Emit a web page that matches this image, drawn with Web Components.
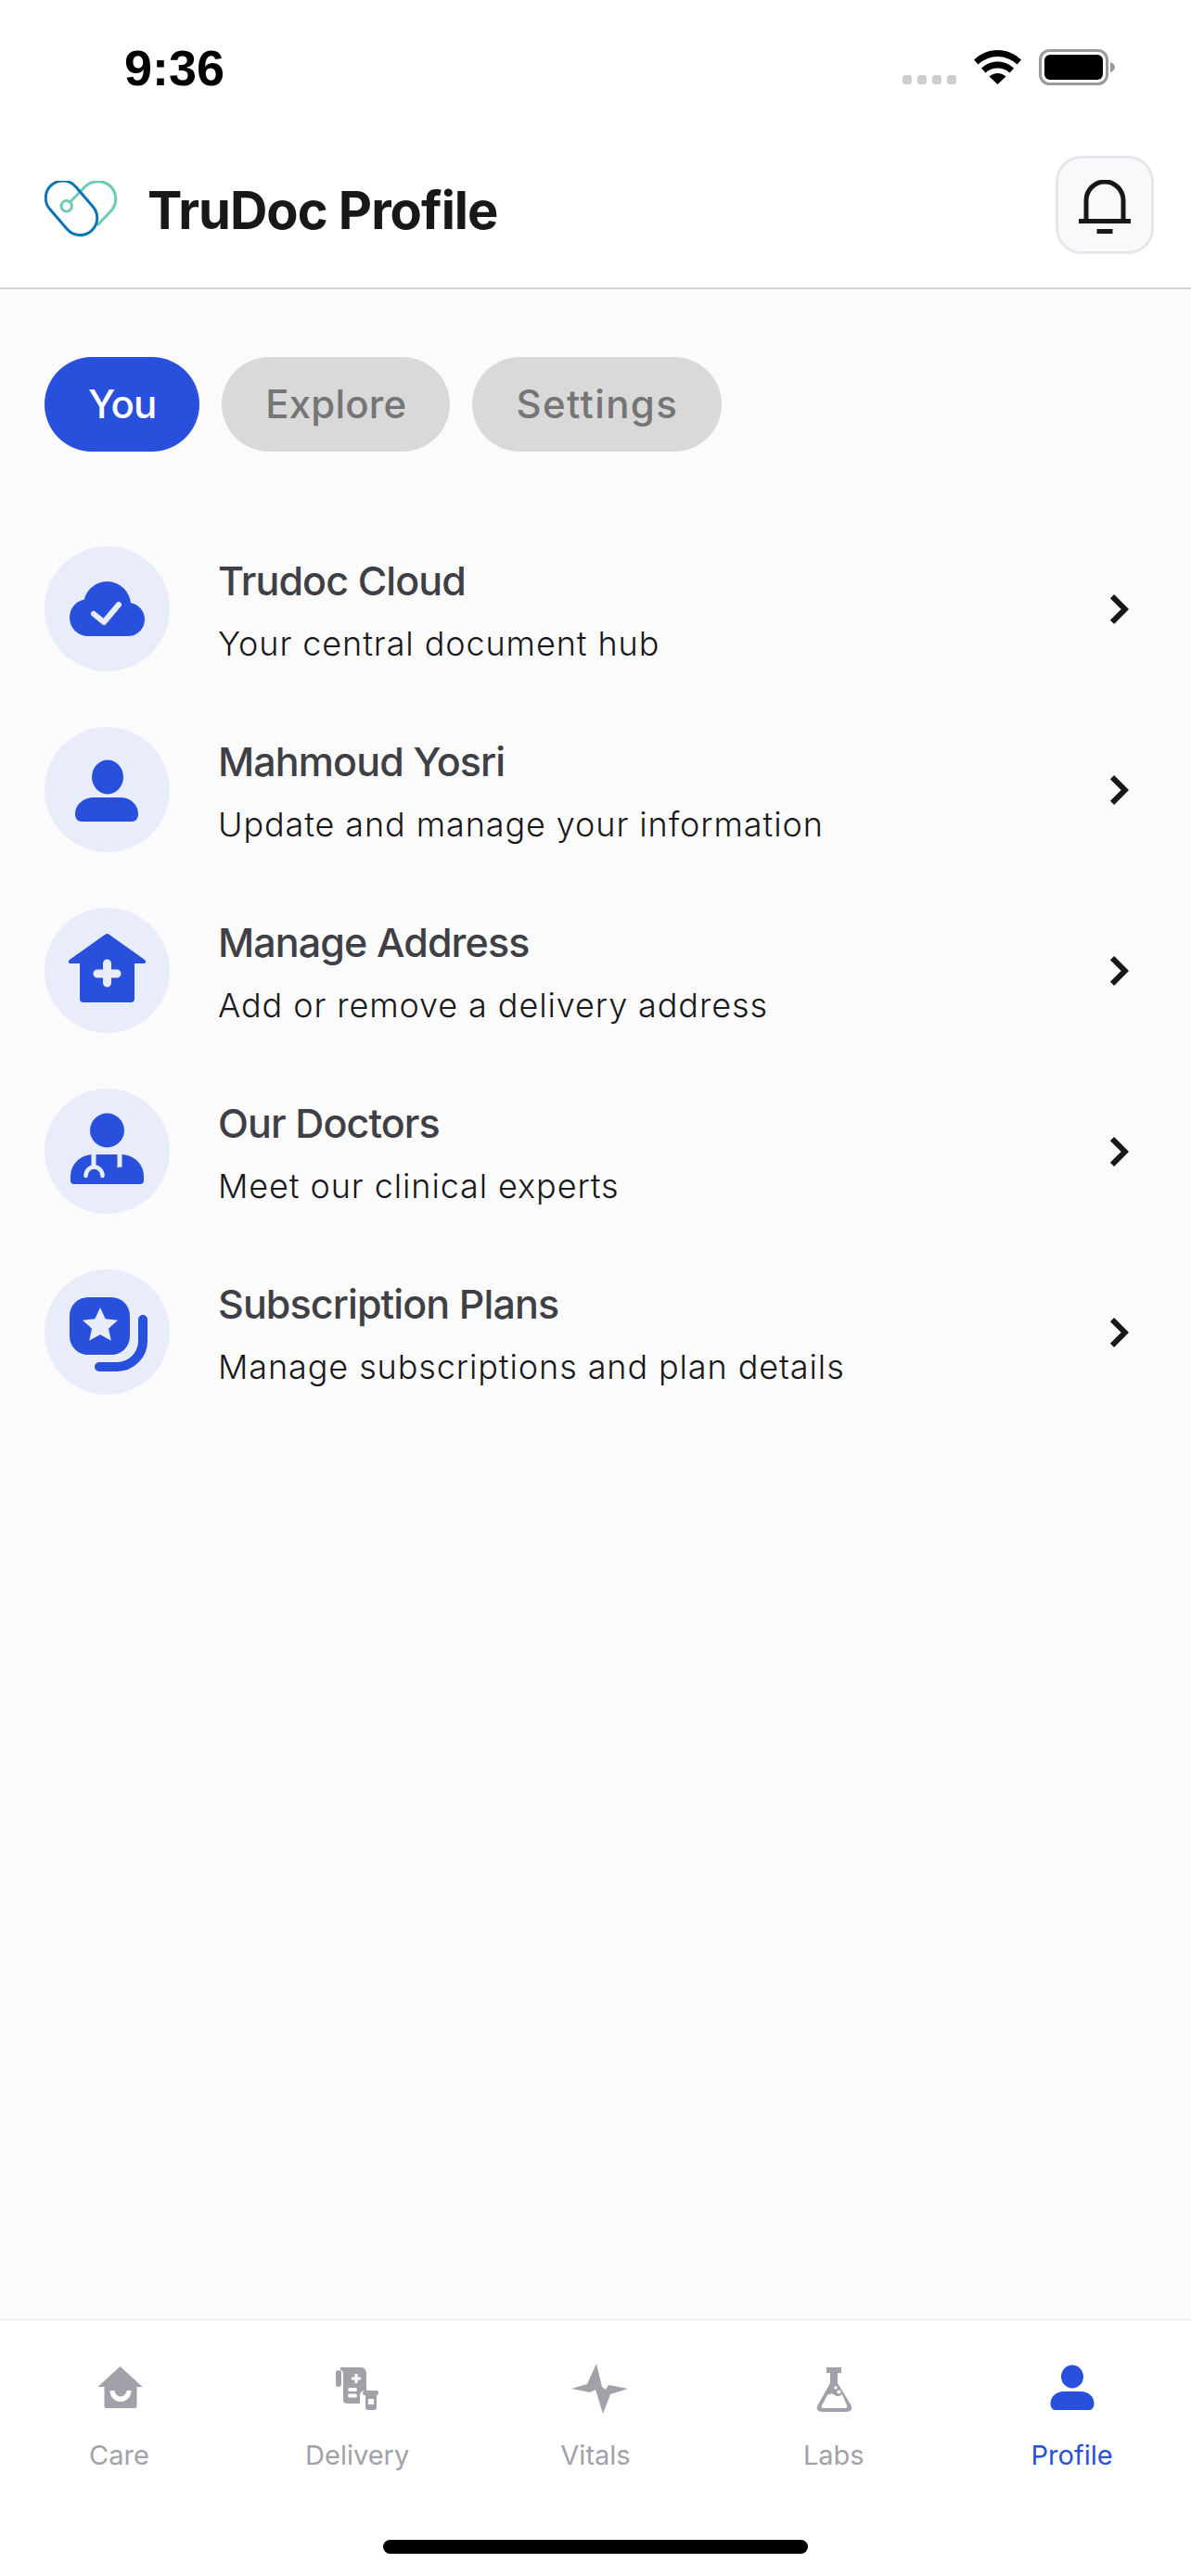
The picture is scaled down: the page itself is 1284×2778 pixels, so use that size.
<!DOCTYPE html>
<html lang="en">
<head>
<meta charset="utf-8">
<title>TruDoc Profile</title>
<style>
  html, body { margin: 0; padding: 0; background: #fff; }
  body { font-family: Inter, "Liberation Sans", sans-serif; }
</style>
</head>
<body>
<trudoc-app>
  <status-bar slot="status" time="9:36"></status-bar>
  <app-header slot="header">TruDoc Profile</app-header>

  <pill-tabs>
    <pill-tab active style="letter-spacing: -1px">You</pill-tab>
    <pill-tab style="letter-spacing: 0.2px">Explore</pill-tab>
    <pill-tab style="letter-spacing: 1.4px">Settings</pill-tab>
  </pill-tabs>

  <menu-list>
    <menu-row icon="cloud" heading="Trudoc Cloud">Your central document hub</menu-row>
    <menu-row icon="person" heading="Mahmoud Yosri">Update and manage your information</menu-row>
    <menu-row icon="house" heading="Manage Address">Add or remove a delivery address</menu-row>
    <menu-row icon="doctor" heading="Our Doctors">Meet our clinical experts</menu-row>
    <menu-row icon="plans" heading="Subscription Plans">Manage subscriptions and plan details</menu-row>
  </menu-list>

  <tab-bar slot="tabs">
    <tab-item icon="care">Care</tab-item>
    <tab-item icon="delivery">Delivery</tab-item>
    <tab-item icon="vitals">Vitals</tab-item>
    <tab-item icon="labs">Labs</tab-item>
    <tab-item icon="profile" active>Profile</tab-item>
  </tab-bar>
</trudoc-app>

<script>
// all row icons are drawn on the 135 box of the round badge
const BLUE = '#2850dc';
const TINT = '#e9edfb';

const ROW_ICONS = {
  cloud: `
    <g fill="${BLUE}">
      <circle cx="47" cy="77" r="20"/>
      <circle cx="67.500" cy="63.500" r="25.500"/>
      <circle cx="90" cy="79" r="18"/>
      <rect x="47" y="68" width="43" height="29"/>
    </g>
    <path fill="none" stroke="${TINT}" stroke-width="6" stroke-linecap="round" stroke-linejoin="round" d="M53 73l11 9 16-19"/>`,
  person: `
    <ellipse fill="${BLUE}" cx="68" cy="54" rx="17" ry="18.5"/>
    <path fill="${BLUE}" d="M33 94c0-11 10-18 20-18h29c10 0 19 7 19 18 0 5-3 8-7 8H40c-4 0-7-3-7-8z"/>`,
  house: `
    <path fill="${BLUE}" d="M65 29a4 4 0 0 1 5 0l38 27c2 2 1 4-1 4H97v38a4 4 0 0 1-4 4H42a4 4 0 0 1-4-4V60H28c-2 0-3-2-1-4z"/>
    <path fill="none" stroke="${TINT}" stroke-width="9" stroke-linecap="round" d="M67.500 60v21M57 71h21"/>`,
  doctor: `
    <circle fill="${BLUE}" cx="67.500" cy="45" r="18.500"/>
    <path fill="${BLUE}" d="M28 95c0-14 11-24 25-24h29c14 0 25 10 25 24v4a4 4 0 0 1-4 4H32a4 4 0 0 1-4-4z"/>
    <path fill="none" stroke="${TINT}" stroke-width="5" d="M53 70v15M81 70v16"/>
    <path fill="none" stroke="${TINT}" stroke-width="4.500" stroke-linecap="round" d="M44.500 94a9 9.500 0 0 1 18 0"/>
    <circle fill="${BLUE}" cx="82" cy="91" r="6.500"/>`,
  plans: `
    <rect fill="${BLUE}" x="27" y="30" width="65" height="62" rx="20"/>
    <path fill="${TINT}" d="M60 41l5.600 12.200 13.400 1.500-10 9 2.800 13.100L60 70.200l-11.800 6.600L51 63.700l-10-9 13.400-1.500z"/>
    <path fill="none" stroke="${BLUE}" stroke-width="10" stroke-linecap="round" d="M106 54v23a28 28 0 0 1-28 28H59"/>`
};

// tab bar icons are on a 64 box
const TAB_ICONS = {
  care: `
    <g transform="translate(1.500 0)">
      <path fill="currentColor" d="M32 8l24 22h-6v21a2 2 0 0 1-2 2H17a2 2 0 0 1-2-2V30H8z"/>
      <path fill="#fff" d="M21 34h5a6.500 6.500 0 0 0 13 0h5a11.500 12 0 0 1-23 0z"/>
    </g>`,
  delivery: `
    <path fill="currentColor" d="M14 9h22a6 6 0 0 1 6 6v19h-2a5 5 0 0 0-5 5v9H21a4 4 0 0 1-4-4V16a4 4 0 0 0-3-4z"/>
    <rect fill="currentColor" x="9" y="12" width="6" height="18" rx="3"/>
    <path fill="#fff" d="M29.500 16h3v3.500H36v3h-3.500V26h-3v-3.500H26v-3h3.500z"/>
    <rect fill="#fff" x="22" y="31" width="10" height="4" rx="2"/>
    <rect fill="#fff" x="22" y="37.500" width="10" height="4" rx="2"/>
    <rect fill="currentColor" x="38" y="34" width="17" height="5" rx="2"/>
    <path fill="currentColor" d="M41 39h12v13a3 3 0 0 1-3 3h-6a3 3 0 0 1-3-3z"/>
    <rect fill="#fff" x="44" y="43" width="6" height="6"/>`,
  vitals: `
    <path fill="currentColor" transform="translate(4 0)" d="M29 5l6 25 4 3 3-5 21 4-19 6-8 21-8-26-6 3-20-4 17-5z"/>`,
  labs: `
    <path fill="currentColor" d="M24 9h16v6h-4v11l14 23c3 5 0 8-5 8H20c-5 0-8-3-5-8l13-23V15h-4z"/>
    <path fill="#fff" d="M25 39c3-2 6-2 8 0s6 1 8-1l5 12c1 2 0 3-2 3H21c-2 0-3-1-2-3z"/>
    <circle fill="#fff" cx="34" cy="31" r="1.700"/>
    <circle fill="#fff" cx="37.500" cy="35.500" r="2"/>`,
  profile: `
    <ellipse fill="currentColor" cx="32" cy="19" rx="12" ry="12.500"/>
    <path fill="currentColor" d="M8.500 48c0-8 7-13 14-13h19c7 0 14 5 14 13 0 4-2 7-5 7H13.500c-3 0-5-3-5-7z"/>`
};

class StatusBar extends HTMLElement {
  constructor() {
    super();
    this.attachShadow({ mode: 'open' });
    this.shadowRoot.innerHTML = `
      <style>
        :host {
          display: flex;
          justify-content: space-between;
          align-items: flex-start;
          height: 132px;
          box-sizing: border-box;
          padding: 44px 82px 0 134px;
          background: #fff;
        }
        .time {
          font: 600 54px/58px "Liberation Sans", Arial, sans-serif;
          color: #000;
        }
        .right { display: flex; align-items: flex-start; margin-top: 9px; }
        .dots { display: flex; gap: 6px; margin-top: 28px; margin-right: 19px; }
        .dots i { width: 10px; height: 10px; border-radius: 3px; background: #cdcdcd; }
        svg { display: block; }
        .wifi { margin-right: 19px; margin-top: 1px; }
      </style>
      <span class="time"></span>
      <div class="right">
        <div class="dots"><i></i><i></i><i></i><i></i></div>
        <svg class="wifi" width="51" height="37" viewBox="0 0 51 37">
          <path fill="#000" d="M25.500 0C35 0 44 4 51 10.500l-4.500 5C40.500 10 33 7 25.500 7S10.500 10 4.500 15.500L0 10.500C7 4 16 0 25.500 0z"/>
          <path fill="#000" d="M25.500 12.500c6.500 0 12.500 2.500 17.500 7l-4.500 5c-3.500-3.200-8-5-13-5s-9.500 1.800-13 5L8 19.500c5-4.500 11-7 17.500-7z"/>
          <path fill="#000" d="M25.500 25c3.500 0 6.500 1.200 9 3.500L25.500 37l-9-8.500c2.500-2.300 5.500-3.500 9-3.500z"/>
        </svg>
        <svg width="82" height="39" viewBox="0 0 82 39">
          <rect x="1.500" y="1.500" width="72" height="36" rx="10" fill="none" stroke="#9a9a9a" stroke-width="3"/>
          <rect x="6" y="6" width="63" height="27" rx="6" fill="#000"/>
          <path d="M77 14c3 1 5 3 5 5.500S80 24 77 25z" fill="#9a9a9a"/>
        </svg>
      </div>
    `;
    this.shadowRoot.querySelector('.time').textContent = this.getAttribute('time');
  }
}

class AppHeader extends HTMLElement {
  constructor() {
    super();
    this.attachShadow({ mode: 'open' });
    this.shadowRoot.innerHTML = `
      <style>
        :host {
          display: flex;
          align-items: center;
          justify-content: space-between;
          height: 180px;
          box-sizing: border-box;
          padding: 0 40px 0 48px;
          background: #fff;
          border-bottom: 2px solid #d4d4d4;
        }
        .brand { display: flex; align-items: center; gap: 31px; padding-top: 8px; }
        .title {
          margin-top: 4px;
          font: 700 56px/64px Inter, "Liberation Sans", sans-serif;
          letter-spacing: -1px;
          color: #18181b;
        }
        svg { display: block; }
        button {
          width: 106px;
          height: 106px;
          padding: 4px 0 0;
          display: flex;
          align-items: center;
          justify-content: center;
          background: #f8f9fb;
          border: 3px solid #e5e7eb;
          border-radius: 28px;
        }
      </style>
      <div class="brand">
        <svg width="80" height="60" viewBox="18 25 80 60">
          <g fill="none" stroke="#6fc9b7" stroke-width="3">
            <circle cx="41.700" cy="52.300" r="5.700"/>
            <path d="M45.500 48L60 33c6-7 15-9 23-6 12 5 15 19 8 29L75 73"/>
          </g>
          <rect x="14.300" y="35.750" width="65.400" height="37" rx="18.500" fill="none" stroke="#0a74b5" stroke-width="3" transform="rotate(49.300 47 54.250)"/>
        </svg>
        <span class="title"><slot></slot></span>
      </div>
      <button aria-label="Notifications">
        <svg width="56" height="58" viewBox="0 0 56 58">
          <path fill="none" stroke="#18181b" stroke-width="5" d="M0 44.500h56M8 44.500V22a20 20 0 0 1 40 0v22.500"/>
          <path fill="none" stroke="#18181b" stroke-width="5" d="M19.500 55.500h17"/>
        </svg>
      </button>
    `;
  }
}

class PillTabs extends HTMLElement {
  constructor() {
    super();
    this.attachShadow({ mode: 'open' });
    this.shadowRoot.innerHTML = `
      <style>
        :host { display: flex; gap: 24px; padding: 0 48px; }
      </style>
      <slot></slot>
    `;
  }
}

class PillTab extends HTMLElement {
  constructor() {
    super();
    this.attachShadow({ mode: 'open' });
    this.shadowRoot.innerHTML = `
      <style>
        :host {
          display: block;
          height: 102px;
          padding: 0 47px;
          border-radius: 51px;
          background: #d9d9d9;
          color: #757575;
          font: 500 42px/102px Inter, "Liberation Sans", sans-serif;
        }
        :host([active]) { background: ${BLUE}; color: #fff; }
      </style>
      <slot></slot>
    `;
  }
}

class MenuList extends HTMLElement {
  constructor() {
    super();
    this.attachShadow({ mode: 'open' });
    this.shadowRoot.innerHTML = `
      <style>
        :host { display: flex; flex-direction: column; gap: 60px; margin-top: 102px; padding: 0 48px; }
      </style>
      <slot></slot>
    `;
  }
}

class MenuRow extends HTMLElement {
  constructor() {
    super();
    this.attachShadow({ mode: 'open' });
    this.shadowRoot.innerHTML = `
      <style>
        :host { display: flex; align-items: center; height: 135px; }
        .badge { flex: none; width: 135px; height: 135px; border-radius: 50%; background: ${TINT}; }
        .badge svg { display: block; }
        .text { flex: 1; margin-left: 52px; padding-top: 3px; }
        .heading {
          font: 500 43px/56px Inter, "Liberation Sans", sans-serif;
          letter-spacing: -0.9px;
          color: #3f3f46;
        }
        .sub {
          margin-top: 15px;
          font: 300 36px/50px Inter, "Liberation Sans", sans-serif;
          letter-spacing: 0.9px;
          color: #18181b;
        }
        .chevron { flex: none; margin-right: 19px; }
      </style>
      <div class="badge"><svg width="135" height="135" viewBox="0 0 135 135">${ROW_ICONS[this.getAttribute('icon')]}</svg></div>
      <div class="text">
        <div class="heading"></div>
        <div class="sub"><slot></slot></div>
      </div>
      <svg class="chevron" width="21" height="34" viewBox="0 0 21 34">
        <path fill="none" stroke="#18181b" stroke-width="6" d="M3 3.200L16.800 17 3 30.800"/>
      </svg>
    `;
    this.shadowRoot.querySelector('.heading').textContent = this.getAttribute('heading');
  }
}

class TabBar extends HTMLElement {
  constructor() {
    super();
    this.attachShadow({ mode: 'open' });
    this.shadowRoot.innerHTML = `
      <style>
        :host {
          display: block;
          height: 278px;
          box-sizing: border-box;
          padding-top: 41px;
          background: #fff;
          border-top: 3px solid #f3f3f3;
        }
        .tabs { display: grid; grid-template-columns: repeat(5, 1fr); }
        .home { width: 458px; height: 15px; margin: 71px auto 0; border-radius: 8px; background: #000; }
      </style>
      <div class="tabs"><slot></slot></div>
      <div class="home"></div>
    `;
  }
}

class TabItem extends HTMLElement {
  constructor() {
    super();
    this.attachShadow({ mode: 'open' });
    this.shadowRoot.innerHTML = `
      <style>
        :host {
          display: flex;
          flex-direction: column;
          align-items: center;
          gap: 20px;
          color: #a1a1aa;
          font: 400 29px/40px Inter, "Liberation Sans", sans-serif;
        }
        :host([active]) { color: ${BLUE}; }
        svg { display: block; overflow: visible; }
      </style>
      <svg width="64" height="64" viewBox="0 0 64 64">${TAB_ICONS[this.getAttribute('icon')]}</svg>
      <span><slot></slot></span>
    `;
  }
}

class TrudocApp extends HTMLElement {
  constructor() {
    super();
    this.attachShadow({ mode: 'open' });
    this.shadowRoot.innerHTML = `
      <style>
        :host { display: flex; flex-direction: column; height: 2778px; overflow: hidden; }
        main { flex: 1; background: #fbfbfb; padding-top: 73px; }
      </style>
      <slot name="status"></slot>
      <slot name="header"></slot>
      <main><slot></slot></main>
      <slot name="tabs"></slot>
    `;
  }
}

customElements.define('status-bar', StatusBar);
customElements.define('app-header', AppHeader);
customElements.define('pill-tabs', PillTabs);
customElements.define('pill-tab', PillTab);
customElements.define('menu-list', MenuList);
customElements.define('menu-row', MenuRow);
customElements.define('tab-bar', TabBar);
customElements.define('tab-item', TabItem);
customElements.define('trudoc-app', TrudocApp);
</script>
</body>
</html>
